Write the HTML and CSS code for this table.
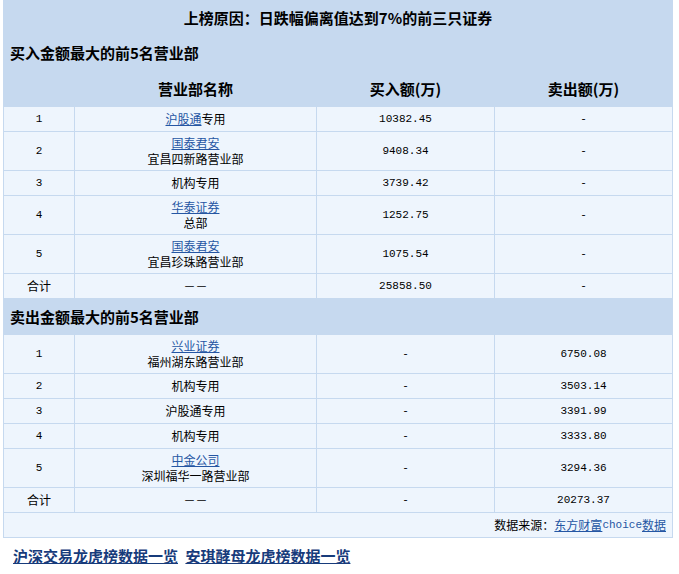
FILE: index.html
```html
<!DOCTYPE html>
<html lang="zh-CN">
<head>
<meta charset="utf-8">
<title>龙虎榜</title>
<link rel="stylesheet" href="styles.css">
</head>
<body>
<table class="lhb">
  <colgroup>
    <col class="c1"><col class="c2"><col class="c3"><col class="c4">
  </colgroup>
  <tr class="title-row"><th colspan="4">上榜原因：日跌幅偏离值达到7%的前三只证券</th></tr>
  <tr class="section-row"><th colspan="4" class="left">买入金额最大的前5名营业部</th></tr>
  <tr class="head-row"><th></th><th>营业部名称</th><th>买入额(万)</th><th>卖出额(万)</th></tr>
  <tr><td><span class="num">1</span></td><td><a href="#">沪股通</a>专用</td><td><span class="num">10382.45</span></td><td><span class="num">-</span></td></tr>
  <tr><td><span class="num">2</span></td><td><a href="#">国泰君安</a><br>宜昌四新路营业部</td><td><span class="num">9408.34</span></td><td><span class="num">-</span></td></tr>
  <tr><td><span class="num">3</span></td><td>机构专用</td><td><span class="num">3739.42</span></td><td><span class="num">-</span></td></tr>
  <tr><td><span class="num">4</span></td><td><a href="#">华泰证券</a><br>总部</td><td><span class="num">1252.75</span></td><td><span class="num">-</span></td></tr>
  <tr><td><span class="num">5</span></td><td><a href="#">国泰君安</a><br>宜昌珍珠路营业部</td><td><span class="num">1075.54</span></td><td><span class="num">-</span></td></tr>
  <tr><td>合计</td><td>－－</td><td><span class="num">25858.50</span></td><td><span class="num">-</span></td></tr>
  <tr class="section-row s2"><th colspan="4" class="left">卖出金额最大的前5名营业部</th></tr>
  <tr><td><span class="num">1</span></td><td><a href="#">兴业证券</a><br>福州湖东路营业部</td><td><span class="num">-</span></td><td><span class="num">6750.08</span></td></tr>
  <tr><td><span class="num">2</span></td><td>机构专用</td><td><span class="num">-</span></td><td><span class="num">3503.14</span></td></tr>
  <tr><td><span class="num">3</span></td><td>沪股通专用</td><td><span class="num">-</span></td><td><span class="num">3391.99</span></td></tr>
  <tr><td><span class="num">4</span></td><td>机构专用</td><td><span class="num">-</span></td><td><span class="num">3333.80</span></td></tr>
  <tr><td><span class="num">5</span></td><td><a href="#">中金公司</a><br>深圳福华一路营业部</td><td><span class="num">-</span></td><td><span class="num">3294.36</span></td></tr>
  <tr><td>合计</td><td>－－</td><td><span class="num">-</span></td><td><span class="num">20273.37</span></td></tr>
  <tr><td colspan="4" class="source">数据来源：<a href="#">东方财富<span class="num">choice</span>数据</a></td></tr>
</table>
<div class="bottom-links">
  <a href="#">沪深交易龙虎榜数据一览</a>
  <a href="#">安琪酵母龙虎榜数据一览</a>
</div>
</body>
</html>
```
FILE: styles.css
```css
html, body {
  margin: 0;
  padding: 0;
  background: #ffffff;
}
body {
  font-family: "Noto Sans CJK SC", "Noto Sans", sans-serif;
  font-size: 12px;
  color: #000;
}
.lhb {
  margin-left: 3px;
  width: 670px;
  table-layout: fixed;
  border-collapse: separate;
  border-spacing: 1px;
  background: #c6d9ef;
}
.c1 { width: 70px; }
.c2 { width: 241px; }
.c3 { width: 177px; }
.c4 { width: 177px; }

.lhb th {
  padding: 0;
  font-size: 15px;
  font-weight: bold;
  text-align: center;
  background: #c6d9ef;
  line-height: 18px;
}
.lhb th.left {
  text-align: left;
  padding-left: 6px;
}
.title-row th { height: 34px; }
.section-row th { height: 34px; }
.section-row.s2 th { height: 35px; }
.head-row th { height: 35px; }

.lhb td {
  background: #eef5fd;
  text-align: center;
  padding: 3px 2px;
  height: 18px;
  line-height: 16px;
  vertical-align: middle;
  overflow: hidden;
}
.lhb td a {
  color: #2556a3;
  text-decoration: underline;
}
.num {
  display: inline-block;
  font-family: "Liberation Mono", "DejaVu Sans Mono", monospace;
  font-size: 11px;
  line-height: 16px;
  vertical-align: top;
}
.lhb td.source {
  text-align: right;
  padding-right: 6px;
}
.bottom-links {
  padding: 9px 0 0 13px;
  font-size: 15px;
  font-weight: bold;
  line-height: 18px;
}
.bottom-links a {
  color: #173b7b;
  text-decoration: underline;
  margin-right: 4px;
}
```
